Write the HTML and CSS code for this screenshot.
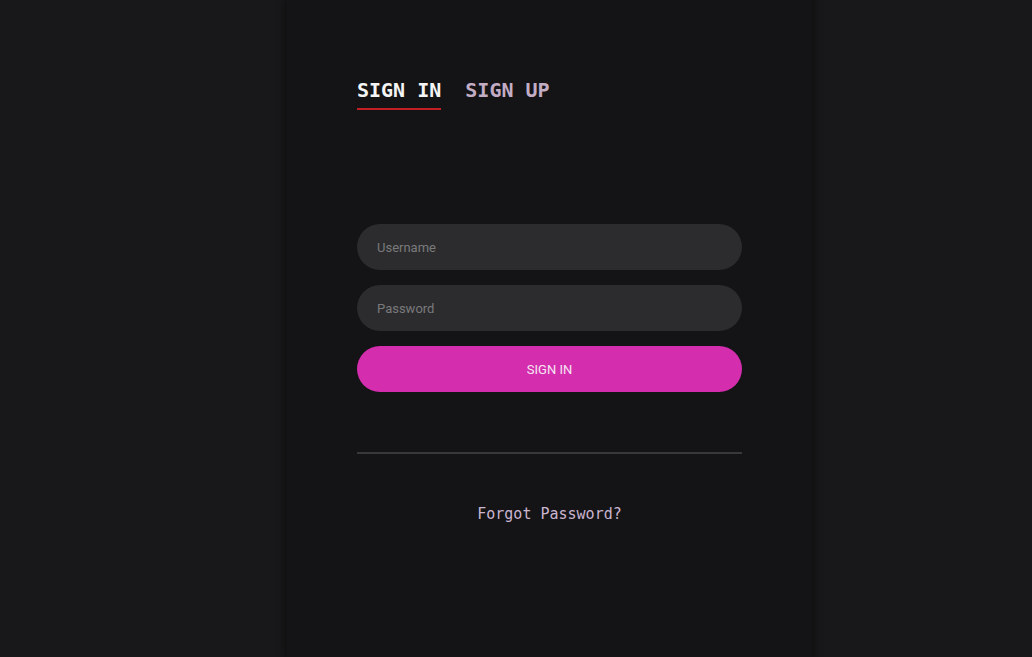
FILE: index.html
```html
<!DOCTYPE html>
<html>
<head>
<meta charset="utf-8">
<link rel="stylesheet" href="styles.css">
</head>
<body>
<div class="card">
  <div class="tabs">
    <span class="tab active">SIGN IN</span>
    <span class="tab">SIGN UP</span>
  </div>
  <form class="form">
    <input class="field" type="text" placeholder="Username">
    <input class="field" type="password" placeholder="Password">
    <button class="btn" type="button">SIGN IN</button>
  </form>
  <div class="divider"></div>
  <div class="forgot">Forgot Password?</div>
</div>
</body>
</html>
```
FILE: styles.css
```css
html, body {
  margin: 0;
  height: 100%;
  background: #18181a;
  overflow: hidden;
}
body {
  box-sizing: border-box;
  padding-left: 67px;
}
.card {
  box-sizing: border-box;
  width: 525px;
  height: 100%;
  margin: 0 auto;
  background: #141416;
  box-shadow: 0 0 8px 2px rgba(0,0,0,0.45);
  padding: 78px 70px 0;
}
.tabs {
  display: flex;
  gap: 24px;
}
.tab {
  font-family: "DejaVu Sans Mono", monospace;
  font-weight: bold;
  font-size: 20px;
  line-height: 24px;
  color: #c3adc5;
  padding-bottom: 6px;
  border-bottom: 2px solid transparent;
}
.tab.active {
  color: #f4f4f4;
  border-bottom-color: #c21e25;
}
.form {
  margin: 114px 0 0;
  display: flex;
  flex-direction: column;
  gap: 15px;
}
.field, .btn {
  box-sizing: border-box;
  width: 385px;
  height: 46px;
  border: none;
  border-radius: 23px;
  font-family: Roboto, sans-serif;
  font-size: 13px;
  outline: none;
}
.field {
  background: #2c2c2e;
  padding: 0 20px;
  color: #ddd;
}
.field::placeholder {
  color: #7a7a7c;
}
.btn {
  background: #d42dae;
  color: #f6e6f2;
  text-align: center;
}
.divider {
  margin-top: 60px;
  height: 2px;
  width: 385px;
  background: #38383a;
}
.forgot {
  margin-top: 51px;
  width: 385px;
  text-align: center;
  font-family: "DejaVu Sans Mono", monospace;
  font-size: 15px;
  line-height: 18px;
  color: #cbb5d0;
}
```
